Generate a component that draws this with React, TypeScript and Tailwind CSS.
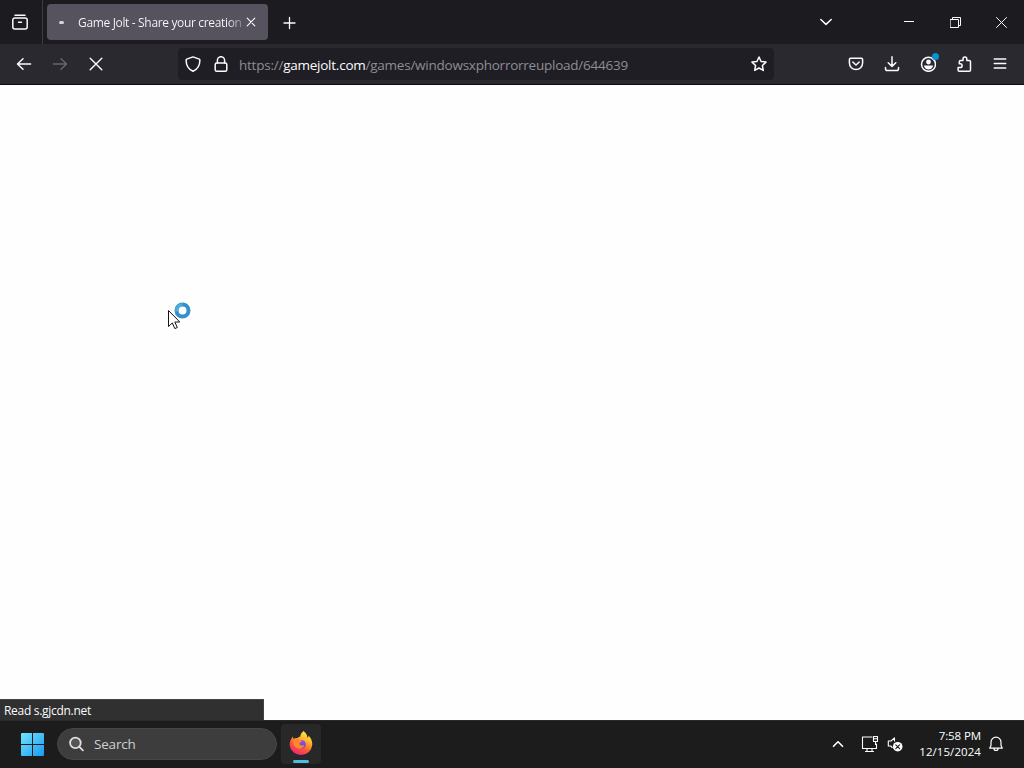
import type { ReactNode } from "react";

interface IconProps {
  children: ReactNode;
  className?: string;
  size?: number;
  width?: number;
}

function Icon({ children, className = "", size = 16, width = 1.5 }: IconProps) {
  return (
    <svg
      className={`shrink-0 ${className}`}
      width={size}
      height={size}
      viewBox={`0 0 ${size} ${size}`}
      fill="none"
      stroke="currentColor"
      strokeWidth={width}
      strokeLinecap="round"
      strokeLinejoin="round"
    >
      {children}
    </svg>
  );
}

function TabStrip() {
  return (
    <div className="flex h-11 items-center bg-[#1c1b20]">
      <div className="flex h-full w-[43px] items-center border-r border-[#3d3c45] pl-3">
        <Icon>
          <path d="M3 1.2h10M2.8 4h10.4a2 2 0 0 1 2 2v7a2 2 0 0 1-2 2H2.8a2 2 0 0 1-2-2V6a2 2 0 0 1 2-2z" />
          <path d="M6.5 8.3h3" />
        </Icon>
      </div>

      <div className="ml-1 flex h-9 w-[221px] items-center rounded bg-[#56535f] text-[#fbfbfe]">
        <div className="ml-3 h-[3px] w-[5px] rounded-full bg-[#d4d2da]" />
        <div className="ml-[14px] w-[166px] whitespace-nowrap bg-linear-to-r from-[#fbfbfe] from-90% to-[#fbfbfe]/20 bg-clip-text pt-0.5 text-[12px] tracking-[-0.34px] text-transparent">
          Game Jolt - Share your creation
        </div>
        <Icon size={10} width={1.1} className="ml-[2px]">
          <path d="M1.2 1.2l7.6 7.6M8.8 1.2L1.2 8.8" />
        </Icon>
      </div>

      <Icon size={14} width={1.3} className="ml-[14px] mt-px">
        <path d="M7.5 1.5v11M2 7h11" />
      </Icon>

      <div className="ml-auto flex items-center">
        <Icon size={14} width={1.5} className="mr-[71px]">
          <path d="M1.8 4.5L7 9.4l5.2-4.9" />
        </Icon>
        <Icon size={10} width={1} className="mr-9">
          <path d="M0 4.5h10" />
        </Icon>
        <Icon size={11} width={1} className="mr-[35px]">
          <path d="M.5 2.5h8v8h-8zM2.5 2.5v-2h8v8h-2" strokeLinejoin="miter" />
        </Icon>
        <Icon size={11} width={1} className="mr-[17px]">
          <path d="M.5.5l10 10M10.5.5l-10 10" />
        </Icon>
      </div>
    </div>
  );
}

function AddressBar() {
  return (
    <div className="flex h-8 w-[596px] items-center rounded bg-[#1f1e24] pl-[7px] pr-[7px]">
      <Icon>
        <path d="M8 .9l6.3 2.2c.4.2.6.5.6.9 0 6-2.6 9.4-6.9 11.3C3.7 13.4 1.1 10 1.1 4c0-.4.2-.7.6-.9z" />
      </Icon>
      <Icon className="ml-3">
        <rect x="2.2" y="7" width="11.6" height="8.2" rx="1.5" />
        <path d="M4.4 7V4.3a3.6 3.6 0 0 1 7.2 0V7" />
      </Icon>
      <div className="ml-[10px] grow whitespace-nowrap pt-[3px] text-[13.5px] tracking-[-0.24px] text-[#8e8d95]">
        https://<span className="text-[#fbfbfe]">gamejolt.com</span>
        /games/windowsxphorrorreupload/644639
      </div>
      <Icon>
        <path d="M8 1l2.1 4.5 4.9.6-3.6 3.4.9 4.9L8 12l-4.3 2.4.9-4.9L1 6.1l4.9-.6z" />
      </Icon>
    </div>
  );
}

function NavBar() {
  return (
    <div className="flex h-[41px] items-center border-b border-[#0d0c11] bg-[#2a2930]">
      <Icon className="ml-4">
        <path d="M14.6 8H1.8M7 2.8L1.5 8 7 13.2" />
      </Icon>
      <Icon className="ml-5 text-[#67666e]">
        <path d="M1.4 8h12.8M9 2.8L14.5 8 9 13.2" />
      </Icon>
      <Icon className="ml-5" width={1.4}>
        <path d="M2.2 2.2l11.6 11.6M13.8 2.2L2.2 13.8" />
      </Icon>
      <div className="ml-[74px]">
        <AddressBar />
      </div>
      <div className="ml-auto mr-4 flex items-center gap-5">
        <Icon>
          <path d="M2.6 2.2h10.8c.7 0 1.2.5 1.2 1.2V7A6.6 6.6 0 0 1 1.4 7V3.4c0-.7.5-1.2 1.2-1.2z" />
          <path d="M4.8 6L8 9l3.2-3" />
        </Icon>
        <Icon>
          <path d="M8 .8v9.6M4.2 6.8L8 10.4l3.8-3.6M1.5 11.5v1.3c0 1.1.7 1.8 1.8 1.8h9.4c1.1 0 1.8-.7 1.8-1.8v-1.3" />
        </Icon>
        <div className="relative">
          <Icon>
            <circle cx="8.5" cy="8.3" r="7" />
            <circle cx="8.5" cy="6" r="2.4" fill="currentColor" stroke="none" />
            <path d="M4 9.5h9c0 2.2-2 4-4.5 4S4 11.7 4 9.5z" fill="currentColor" stroke="none" />
          </Icon>
          <div className="absolute -right-[3px] -top-[3px] h-[7px] w-[7px] rounded-full bg-[#0790d2]" />
        </div>
        <Icon>
          <path d="M3.3 15.2h9.9c.8 0 1.3-.5 1.3-1.3V5.7c0-.8-.5-1.3-1.3-1.3h-2.4V2.9a1.9 1.9 0 0 0-3.8 0v1.5H4.6c-.8 0-1.3.5-1.3 1.3v2.1h.9a1.8 1.8 0 0 1 0 3.8H2.1v2.3c0 .8.4 1.3 1.2 1.3z" />
        </Icon>
        <Icon width={1.3}>
          <path d="M2.2 3h11.6M2.2 7.5h11.6M2.2 12h11.6" />
        </Icon>
      </div>
    </div>
  );
}

function BusyCursor() {
  return (
    <svg className="absolute left-[167px] top-[216px]" width="25" height="30" viewBox="0 0 25 30">
      <circle cx="15.5" cy="9.5" r="6" fill="none" stroke="#368fc8" strokeWidth="4" />
      <path d="M9.7 10.5a6 6 0 0 1 5.8-7" fill="none" stroke="#4eadd9" strokeWidth="3" />
      <path
        d="M1.5 9.5v16l3.8-3.6 2.5 5.7 2.5-1.1-2.5-5.5h5z"
        fill="#fff"
        stroke="#151515"
      />
    </svg>
  );
}

function Firefox() {
  return (
    <svg width="24" height="26" viewBox="0 0 24 26">
      <defs>
        <linearGradient id="flame" x1=".8" y1="0" x2=".3" y2="1">
          <stop offset="0" stopColor="#fff34f" />
          <stop offset=".35" stopColor="#ffb52b" />
          <stop offset=".65" stopColor="#ff5a36" />
          <stop offset="1" stopColor="#eb2478" />
        </linearGradient>
        <linearGradient id="globe" x1="0" y1="0" x2="0" y2="1">
          <stop offset="0" stopColor="#a34ce0" />
          <stop offset="1" stopColor="#594bc4" />
        </linearGradient>
      </defs>
      <path
        d="M14.5 0c2.4 1.7 3.7 4 4 6.8.9-.4 1.1-1.5 1-2.3 2.5 2.2 3.8 5.8 3.8 9A11.4 11.4 0 0 1 .6 14C.6 10.5 2 7.7 4 5.4c0 1 .3 1.9.8 2.5 1.1-.7 2.5-1 3.7-.8 1-1 1.9-1.6 2.8-1.7C11.4 3.6 12.6 1.6 14.5 0z"
        fill="url(#flame)"
      />
      <circle cx="12.5" cy="13.3" r="4.3" fill="url(#globe)" />
      <path
        d="M4.7 8c2.1-1 4.6-.7 6.3 1 1 .1 1.7.3 2 .8-.2 1.4-1.7 1.5-2.4 2.2-.4 1.2.2 2 1.3 2.4 1.3.4 2.4-.5 3.7-.1-1 2.5-3.8 4-6.6 3C4.4 16 3.4 11.5 4.7 8z"
        fill="#ff872f"
      />
    </svg>
  );
}

function Taskbar() {
  return (
    <div className="flex h-12 items-center border-t border-[#292929] bg-[#1c1c1c] pb-px text-white">
      <svg className="ml-[21px]" width="23" height="23" viewBox="0 0 23 23">
        <defs>
          <linearGradient id="win" x1="0" y1="0" x2="1" y2="1">
            <stop offset="0" stopColor="#72e4fc" />
            <stop offset="1" stopColor="#189af0" />
          </linearGradient>
        </defs>
        <path
          d="M1 0h10v11H0V1a1 1 0 0 1 1-1zM12 0h10a1 1 0 0 1 1 1v10H12zM0 12h11v11H1a1 1 0 0 1-1-1zM12 12h11v10a1 1 0 0 1-1 1H12z"
          fill="url(#win)"
        />
      </svg>

      <div className="ml-[13px] flex h-8 w-[220px] items-center rounded-full border border-[#454545] bg-[#3d3d3d] pl-[11px]">
        <Icon width={1.8} className="text-[#dedede]">
          <circle cx="6.4" cy="6.9" r="5.3" fill="#555" />
          <path d="M10.4 10.8l3.5 3.5" />
        </Icon>
        <span className="ml-[9px] pt-px text-[13.5px] tracking-[-0.2px] text-[#d0d0d0]">Search</span>
      </div>

      <div className="ml-1 flex h-10 w-10 flex-col items-center rounded bg-[#282828] pt-[7px]">
        <Firefox />
        <div className="mt-[3px] h-[3px] w-4 shrink-0 rounded-full bg-[#55b9e6]" />
      </div>

      <div className="ml-auto flex items-center">
        <Icon size={12} width={1.6}>
          <path d="M1.5 8.3L6 3.8l4.5 4.5" />
        </Icon>
        <Icon size={18} width={1.1} className="ml-[17px]">
          <path d="M11 2H1.5v11.5h14V9M6 13.5v3M11 13.5v3M4.5 16.5h8" />
          <path d="M12.5 1.5h4v5h-4zM12.5 3.8h4M14.5 6.5v3" />
        </Icon>
        <Icon size={16} width={1.1} className="ml-2">
          <path d="M7.5 5V1.8L4 5H1.3v5h2.4l1.5 1.5" />
          <circle cx="10.7" cy="10.7" r="4.8" fill="#fff" stroke="none" />
          <path d="M8.8 8.8l3.8 3.8M12.6 8.8l-3.8 3.8" stroke="#1c1c1c" />
        </Icon>
        <div className="ml-[15px] w-[63px] whitespace-nowrap text-right text-[11.5px] leading-4 tracking-[0.07px]">
          <div className="tracking-[-0.1px]">7:58 PM</div>
          <div>12/15/2024</div>
        </div>
        <Icon width={1.2} className="ml-[7px] mr-5">
          <path d="M1.7 12.2L3 9.4V6.2a5 5 0 0 1 10 0v3.2l1.3 2.8zM6 12.5a2 2 0 0 0 4 0" />
        </Icon>
      </div>
    </div>
  );
}

export default function App() {
  return (
    <div className="flex h-[768px] w-[1024px] flex-col overflow-hidden bg-white font-['Open_Sans','Noto_Sans',sans-serif] text-[#fbfbfe]">
      <TabStrip />
      <NavBar />
      <main className="relative flex grow flex-col justify-end bg-[#fefefe]">
        <BusyCursor />
        <div className="flex h-[21px] w-[264px] items-center border-r border-t border-[#434343] bg-[#303030] pl-1 pt-0.5 text-[12px] tracking-[-0.3px]">
          Read s.gjcdn.net
        </div>
      </main>
      <Taskbar />
    </div>
  );
}
